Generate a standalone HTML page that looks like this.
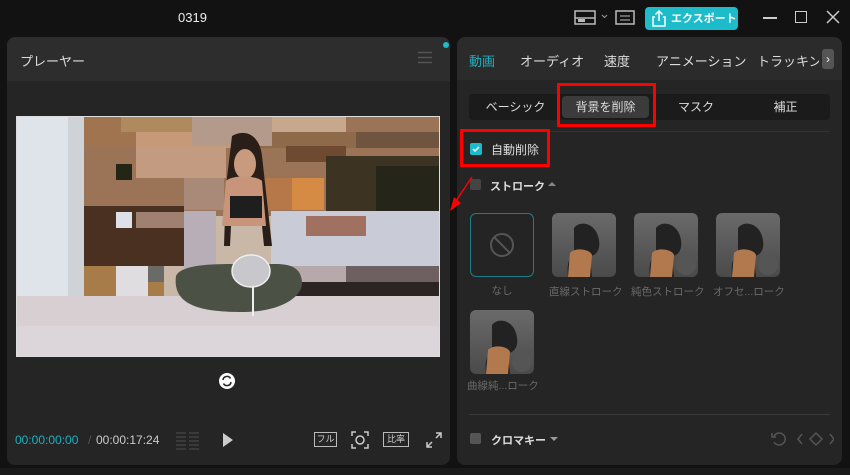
<!DOCTYPE html>
<html><head><meta charset="utf-8"><style>
*{margin:0;padding:0;box-sizing:border-box}
body{width:850px;height:475px;background:#121212;position:relative;overflow:hidden;font-family:"Liberation Sans","Noto Sans CJK JP",sans-serif;color:#ddd}
.a{position:absolute}
.t{font-size:12px;white-space:nowrap}
.seg{top:94px;height:26px;line-height:26px;text-align:center;font-size:12px;color:#ddd}
.tile{width:64px;height:64px;border-radius:6px;background:linear-gradient(#6a6a6a,#4a4a4a);overflow:hidden}
.lbl{font-size:10.5px;color:#6a6a6a;white-space:nowrap;width:70px;text-align:center}
.dl{width:20px;height:20px;border-radius:50%;background:#555;right:2px;bottom:2px}
</style></head><body>
<div class="a t" style="left:178px;top:10px;font-size:13px;color:#eee">0319</div>
<svg class="a" style="left:570px;top:8px" width="70" height="20"><rect x="5" y="3" width="20" height="13" fill="none" stroke="#bbb" stroke-width="1.5"/><line x1="5" y1="10" x2="25" y2="10" stroke="#bbb" stroke-width="1.5"/><rect x="8" y="11" width="7" height="3" fill="#bbb"/><path d="M32 7l2.5 2.5 2.5-2.5" stroke="#999" fill="none"/><rect x="46" y="3" width="18" height="13" fill="none" stroke="#bbb" stroke-width="1.5"/><line x1="50" y1="8" x2="60" y2="8" stroke="#bbb"/><line x1="50" y1="12" x2="60" y2="12" stroke="#bbb"/></svg>
<div class="a" style="left:645px;top:7px;width:93px;height:23px;background:#1cbcca;border-radius:4px"></div>
<svg class="a" style="left:650px;top:9px" width="18" height="19"><path d="M5 8H3v9h12V8h-2M9 12V2M5.5 5.5L9 2l3.5 3.5" stroke="#fff" stroke-width="1.5" fill="none"/></svg>
<div class="a t" style="left:671px;top:10px;color:#fff;font-size:11px;font-weight:bold">エクスポート</div>
<div class="a" style="left:763px;top:17px;width:14px;height:1.5px;background:#ccc"></div>
<div class="a" style="left:795px;top:11px;width:12px;height:12px;border:1.5px solid #ccc"></div>
<svg class="a" style="left:826px;top:10px" width="14" height="14"><path d="M1 1L13 13M13 1L1 13" stroke="#ccc" stroke-width="1.5"/></svg>

<div class="a" style="left:7px;top:37px;width:443px;height:428px;background:#252525;border-radius:8px;overflow:hidden">
 <div class="a" style="left:0;top:0;width:443px;height:44px;background:#2d2d2d"></div>
</div>
<div class="a" style="left:443px;top:42px;width:6px;height:6px;border-radius:50%;background:#1cbcca"></div>
<div class="a t" style="left:20px;top:51px;font-size:13px;color:#ddd">プレーヤー</div>
<svg class="a" style="left:418px;top:51px" width="14" height="13"><path d="M0 1.5H14M0 6.5H14M0 11.5H14" stroke="#555" stroke-width="1.5"/></svg>
<svg class="a" style="left:16px;top:116px" width="424" height="241">
 <rect width="424" height="241" fill="#c9b8a8"/>
 <rect x="0" y="0" width="68" height="241" fill="#dfe3ea"/>
 <rect x="52" y="0" width="16" height="180" fill="#cfd2d6"/>
 <rect x="68" y="0" width="356" height="100" fill="#9b7457"/>
 <rect x="68" y="0" width="100" height="30" fill="#a0744e"/>
 <rect x="105" y="0" width="80" height="16" fill="#b08a5f"/>
 <rect x="200" y="0" width="130" height="16" fill="#c8a88c"/>
 <rect x="120" y="16" width="100" height="16" fill="#c69a78"/>
 <rect x="230" y="16" width="120" height="16" fill="#8f6a4a"/>
 <rect x="340" y="16" width="84" height="16" fill="#6f5440"/>
 <rect x="120" y="32" width="90" height="30" fill="#c39b80"/>
 <rect x="270" y="30" width="60" height="16" fill="#6d4a30"/>
 <rect x="310" y="40" width="114" height="55" fill="#3d3322"/>
 <rect x="360" y="50" width="64" height="50" fill="#26251a"/>
 <rect x="276" y="62" width="32" height="32" fill="#d68b45"/>
 <rect x="230" y="62" width="46" height="32" fill="#b67848"/>
 <rect x="68" y="90" width="100" height="60" fill="#4a3020"/>
 <rect x="100" y="48" width="16" height="16" fill="#232616"/>
 <rect x="100" y="96" width="16" height="16" fill="#dde0e8"/>
 <rect x="120" y="96" width="48" height="16" fill="#a08070"/>
 <rect x="68" y="150" width="80" height="30" fill="#a87c48"/>
 <rect x="68" y="180" width="60" height="16" fill="#5c4030"/>
 <rect x="100" y="150" width="32" height="46" fill="#e0dde0"/>
 <rect x="132" y="150" width="16" height="16" fill="#6a6a66"/>
 <rect x="168" y="62" width="40" height="32" fill="#a98a78"/>
 <rect x="168" y="95" width="32" height="100" fill="#b7aeb8"/>
 <rect x="255" y="95" width="169" height="60" fill="#c9cbd6"/>
 <rect x="255" y="150" width="169" height="16" fill="#b7a8ac"/>
 <rect x="270" y="166" width="154" height="30" fill="#2b2422"/>
 <rect x="330" y="150" width="94" height="16" fill="#6e5f60"/>
 <rect x="290" y="100" width="60" height="20" fill="#a07060"/>
 <rect x="0" y="180" width="424" height="61" fill="#d7cfd2"/>
 <rect x="0" y="210" width="424" height="31" fill="#dcd6da"/>
 <rect x="176" y="0" width="80" height="30" fill="#b49a8a"/>
 <path d="M216 20c14-8 28 0 30 20l10 90h-8l-4-40h-28l-2 40h-6l2-60z" fill="#2a1e18"/>
 <ellipse cx="229" cy="48" rx="11" ry="15" fill="#c89a7e"/>
 <path d="M210 65c5-6 30-6 36 0l4 45h-44z" fill="#c8957a"/>
 <rect x="214" y="80" width="32" height="22" fill="#1e1e1e"/>
 <path d="M160 160c5-12 40-12 60-12h40c15 0 25 4 26 18s-20 30-60 30-70-6-66-36z" fill="#4b5245"/>
 <ellipse cx="235" cy="155" rx="19" ry="16" fill="#c8c8cc" stroke="#eee" stroke-width="1.5"/>
 <line x1="237" y1="171" x2="237" y2="200" stroke="#eee" stroke-width="2"/>
 <rect x="0" y="0" width="424" height="241" fill="none" stroke="#ddd" stroke-width="2"/>
</svg>
<svg class="a" style="left:218px;top:372px" width="18" height="18"><circle cx="9" cy="9" r="8" fill="#fff"/><path d="M5 8a4 4 0 0 1 7.5-1.5M13 10a4 4 0 0 1-7.5 1.5" stroke="#252525" stroke-width="1.6" fill="none"/></svg>
<div class="a t" style="left:15px;top:433px;color:#1cb1c0">00:00:00:00</div>
<div class="a t" style="left:88px;top:433px;color:#555">/</div>
<div class="a t" style="left:96px;top:433px;color:#ccc">00:00:17:24</div>
<svg class="a" style="left:176px;top:431px" width="24" height="19"><g stroke="#3a3a3a" stroke-width="2"><path d="M0 2h10M0 6h10M0 10h10M0 14h10M0 18h10M13 2h10M13 6h10M13 10h10M13 14h10M13 18h10"/></g></svg>
<svg class="a" style="left:222px;top:433px" width="12" height="14"><path d="M1 0L11 7L1 14z" fill="#ccc"/></svg>
<div class="a" style="left:314px;top:432px;width:23px;height:15px;border:1px solid #bbb;font-size:9px;line-height:13px;text-align:center;color:#ccc">フル</div>
<svg class="a" style="left:351px;top:431px" width="18" height="18"><path d="M1 5V1h4M13 1h4v4M17 13v4h-4M5 17H1v-4" stroke="#ccc" stroke-width="1.5" fill="none"/><circle cx="9" cy="9" r="4" stroke="#ccc" stroke-width="1.5" fill="none"/></svg>
<div class="a" style="left:383px;top:432px;width:26px;height:15px;border:1px solid #bbb;font-size:9px;line-height:13px;text-align:center;color:#ccc">比率</div>
<svg class="a" style="left:426px;top:432px" width="16" height="16"><path d="M10 1h5v5M15 1l-5 5M6 15H1v-5M1 15l5-5" stroke="#ccc" stroke-width="1.5" fill="none"/></svg>

<div class="a" style="left:457px;top:37px;width:385px;height:428px;background:#252525;border-radius:8px;overflow:hidden">
 <div class="a" style="left:0;top:0;width:385px;height:43px;background:#2b2b2b"></div>
</div>
<div class="a t" style="left:469px;top:51px;font-size:13px;color:#1cb1c0">動画</div>
<div class="a t" style="left:520px;top:51px;font-size:13px">オーディオ</div>
<div class="a t" style="left:604px;top:51px;font-size:13px">速度</div>
<div class="a t" style="left:656px;top:51px;font-size:13px">アニメーション</div>
<div class="a t" style="left:757px;top:51px;font-size:13px;width:62px;overflow:hidden">トラッキング</div>
<div class="a" style="left:822px;top:49px;width:12px;height:20px;background:#555;border-radius:3px;color:#eee;font-size:12px;text-align:center;line-height:20px">›</div>
<div class="a" style="left:469px;top:94px;width:361px;height:26px;background:#1b1b1b;border-radius:4px"></div>
<div class="a" style="left:562px;top:96px;width:87px;height:22px;background:#3b3b3b;border-radius:4px"></div>
<div class="a seg" style="left:469px;width:93px">ベーシック</div>
<div class="a seg" style="left:562px;width:87px">背景を削除</div>
<div class="a seg" style="left:651px;width:90px">マスク</div>
<div class="a seg" style="left:741px;width:89px">補正</div>
<div class="a" style="left:557px;top:83px;width:99px;height:44px;border:3px solid #f00"></div>
<div class="a" style="left:469px;top:131px;width:361px;height:1px;background:#333"></div>
<div class="a" style="left:460px;top:129px;width:90px;height:38px;border:3px solid #f00"></div>
<div class="a" style="left:470px;top:143px;width:12px;height:12px;background:#1cbcca;border-radius:2px"></div>
<svg class="a" style="left:471px;top:144px" width="10" height="10"><path d="M2 5l2 2 4-4" stroke="#fff" stroke-width="1.5" fill="none"/></svg>
<div class="a t" style="left:491px;top:141px">自動削除</div>
<div class="a" style="left:470px;top:179px;width:11px;height:11px;background:#444;border-radius:2px"></div>
<div class="a t" style="left:490px;top:178px;font-weight:bold;font-size:11px">ストローク</div>
<svg class="a" style="left:548px;top:181px" width="8" height="6"><path d="M0 5L4 1L8 5z" fill="#888"/></svg>
<svg class="a" style="left:446px;top:175px" width="30" height="40"><path d="M26 2L10 26" stroke="#f00" stroke-width="1.5"/><path d="M4 36L8 22L15 28z" fill="#f00"/></svg>
<div class="a" style="left:470px;top:213px;width:64px;height:64px;border:1.5px solid #1c7f88;border-radius:6px;background:#242424"></div>
<svg class="a" style="left:487px;top:230px" width="30" height="30"><circle cx="15" cy="15" r="11" stroke="#555" stroke-width="2" fill="none"/><path d="M7 7l16 16" stroke="#555" stroke-width="2"/></svg>
<div class="a lbl" style="left:467px;top:283px">なし</div>
<div class="a tile" style="left:552px;top:213px"><svg width="64" height="64"><path d="M22 15c6-8 20-5 24 8s-2 20-8 20l2 21H16c-2-18 4-20 6-25z" fill="#222"/><path d="M18 40c5-6 20-4 22 2l-2 22H16z" fill="#b2784e"/></svg></div>
<div class="a tile" style="left:634px;top:213px"><svg width="64" height="64"><path d="M22 15c6-8 20-5 24 8s-2 20-8 20l2 21H16c-2-18 4-20 6-25z" fill="#222"/><path d="M18 40c5-6 20-4 22 2l-2 22H16z" fill="#b2784e"/></svg><div class="a dl"></div></div>
<div class="a tile" style="left:716px;top:213px"><svg width="64" height="64"><path d="M22 15c6-8 20-5 24 8s-2 20-8 20l2 21H16c-2-18 4-20 6-25z" fill="#222"/><path d="M18 40c5-6 20-4 22 2l-2 22H16z" fill="#b2784e"/></svg><div class="a dl"></div></div>
<div class="a lbl" style="left:549px;top:284px">直線ストローク</div>
<div class="a lbl" style="left:631px;top:284px">純色ストローク</div>
<div class="a lbl" style="left:713px;top:284px">オフセ...ローク</div>
<div class="a tile" style="left:470px;top:310px"><svg width="64" height="64"><path d="M22 15c6-8 20-5 24 8s-2 20-8 20l2 21H16c-2-18 4-20 6-25z" fill="#222"/><path d="M18 40c5-6 20-4 22 2l-2 22H16z" fill="#b2784e"/></svg><div class="a dl"></div></div>
<div class="a lbl" style="left:467px;top:378px">曲線純...ローク</div>
<div class="a" style="left:469px;top:414px;width:361px;height:1px;background:#3a3a3a"></div>
<div class="a" style="left:470px;top:433px;width:11px;height:11px;background:#555;border-radius:2px"></div>
<div class="a t" style="left:491px;top:432px;font-weight:bold;font-size:11px">クロマキー</div>
<svg class="a" style="left:550px;top:436px" width="8" height="6"><path d="M0 1L4 5L8 1z" fill="#999"/></svg>
<svg class="a" style="left:770px;top:430px" width="64" height="18"><path d="M4 6a6 6 0 1 1 0 6" stroke="#555" stroke-width="1.5" fill="none"/><path d="M2 3v4h4" stroke="#555" stroke-width="1.5" fill="none"/><path d="M32 4l-4 5 4 5M60 4l4 5-4 5" stroke="#555" stroke-width="1.5" fill="none"/><path d="M46 3l6 6-6 6-6-6z" stroke="#555" stroke-width="1.5" fill="none"/></svg>
<div class="a" style="left:0;top:468px;width:850px;height:7px;background:#1a1a1a"></div>
</body></html>
